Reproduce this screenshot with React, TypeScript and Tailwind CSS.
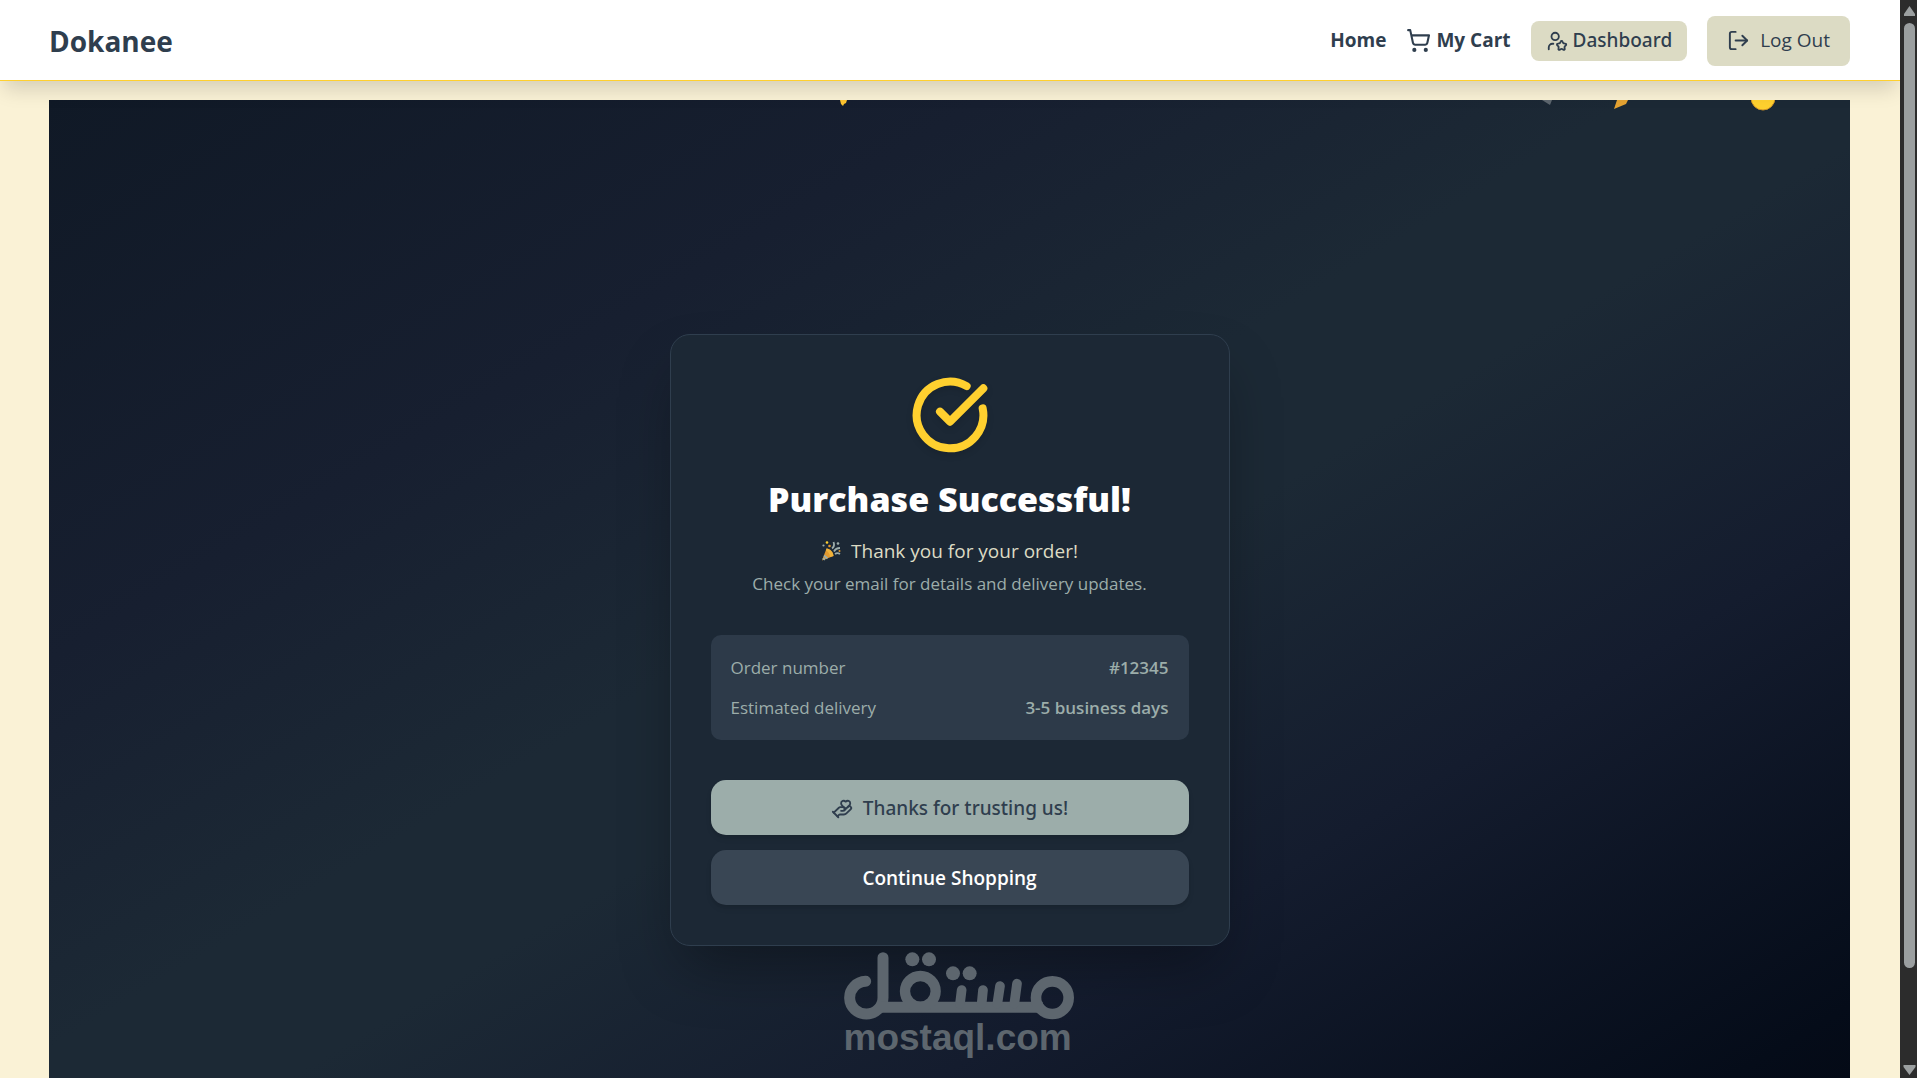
import { CircleCheckBig, HandHeart, LogOut, ShoppingCart, UserStar } from 'lucide-react';

function Header() {
  return (
    <header className="relative z-10 shrink-0 border-b border-[#ffd02f] bg-white shadow-[0_12px_19px_-4px_rgba(0,0,0,0.15)]">
      <div className="flex h-20 items-center justify-between pt-px pr-[50px] pl-[49px] text-[#2f3e4e]">
        <a href="#" className="text-[28px] font-bold">Dokanee</a>

        <nav className="flex items-center gap-5 text-[19px]">
          <a href="#" className="font-bold">Home</a>
          <a href="#" className="flex items-center gap-[5px] font-bold">
            <ShoppingCart className="size-[25px]" />
            My Cart
          </a>
          <a href="#" className="flex h-10 items-center gap-[5px] rounded-lg bg-[#dcdbc4] px-[15px] font-['Noto_Sans',sans-serif] font-medium">
            <UserStar className="size-[22px]" />
            Dashboard
          </a>
          <button type="button" className="flex h-[50px] items-center gap-2.5 rounded-lg bg-[#dcdbc4] px-5">
            <LogOut className="size-[23px]" />
            Log Out
          </button>
        </nav>
      </div>
    </header>
  );
}

function PartyPopper() {
  return (
    <svg viewBox="0 0 20 22" className="h-[22px] w-5" role="img" aria-label="Party popper">
      <path d="M1 20.500 5.500 8.500C9 9 12 12.500 12.500 16Z" fill="#e0982f" />
      <path d="M5.500 8.500C9.500 9 12.500 12 12.500 16L9 17C9 14 7 11.500 5 10.500Z" fill="#f0b23a" />
      <path d="M3 15.500 6.500 18.500M1.800 18.300 4 19.800" stroke="#9cadaa" strokeWidth="1.800" />
      <path d="M11 8.500C13 7 13.500 4.500 12.500 2M13 11.500C14.500 8.500 16.500 8 19 8M14 14C16 12.500 17.500 13 19 14" stroke="#9cadaa" strokeWidth="1.800" fill="none" />
      <circle cx="6" cy="2.500" r="1.300" fill="#ffd02f" />
      <circle cx="8.500" cy="6" r="1.300" fill="#e0982f" />
      <circle cx="17" cy="3.500" r="1.300" fill="#9cadaa" />
      <circle cx="18.500" cy="11" r="1" fill="#e0982f" />
      <circle cx="2.500" cy="5.500" r="1.100" fill="#9cadaa" />
    </svg>
  );
}

// Pieces just coming into view at the top edge
function Confetti() {
  return (
    <div className="pointer-events-none absolute inset-x-0 top-0 h-4" aria-hidden="true">
      <svg viewBox="0 0 8 6" className="absolute top-0 left-[43.9%] h-1.5 w-2">
        <path d="M0 0H7L6 3 4 4 3 6 1 4Z" fill="#ffc52f" />
      </svg>
      <svg viewBox="0 0 10 5" className="absolute top-0 left-[82.9%] h-[5px] w-2.5">
        <path d="M0 0H10L8 5Z" fill="#5d666e" />
      </svg>
      <svg viewBox="0 0 14 9" className="absolute top-0 left-[86.9%] h-[9px] w-3.5">
        <path d="M3 0H14L12 4 0 9Z" fill="#e5a332" />
      </svg>
      <svg viewBox="0 0 24 11" className="absolute top-0 left-[94.5%] h-[11px] w-6">
        <circle cx="12" cy="-2" r="12" fill="#ffd02f" stroke="#d29426" />
      </svg>
    </div>
  );
}

function SuccessCard() {
  return (
    <section className="w-full max-w-[560px] rounded-[20px] border border-[#2f3e4e] bg-[#1c2835] p-10 text-center shadow-[0_30px_60px_-12px_rgba(0,0,0,0.35)]">
      <CircleCheckBig className="mx-auto size-20 text-[#ffd02f] drop-shadow-md" strokeWidth={2.4} />
      <h1 className="mt-[22px] text-[34px] leading-[45px] font-black text-white">Purchase Successful!</h1>
      <p className="mt-3.5 flex items-center justify-center gap-2.5 text-[19px] leading-[30px] text-[#dcdbc4]">
        <PartyPopper />
        Thank you for your order!
      </p>
      <p className="mt-[5px] text-[17px] leading-[25px] text-[#9cadaa]">
        Check your email for details and delivery updates.
      </p>

      <dl className="mt-[39px] flex flex-col gap-[15px] rounded-[10px] bg-[#2d3a49] p-5 text-[17px] leading-[25px] text-[#9cadaa]">
        <div className="flex justify-between">
          <dt>Order number</dt>
          <dd className="font-semibold">#12345</dd>
        </div>
        <div className="flex justify-between">
          <dt>Estimated delivery</dt>
          <dd className="font-semibold">3-5 business days</dd>
        </div>
      </dl>

      <div className="mt-10 flex flex-col gap-[15px] text-[19px]">
        <button type="button" className="flex h-[55px] items-center justify-center gap-2.5 rounded-[15px] bg-[#9cadaa] pt-0.5 font-['Noto_Sans',sans-serif] font-medium text-[#2f3e4e] shadow-md">
          <HandHeart className="size-[22px]" />
          Thanks for trusting us!
        </button>
        <button type="button" className="h-[55px] rounded-[15px] bg-[#394654] pt-0.5 font-semibold text-white shadow-md">
          Continue Shopping
        </button>
      </div>
    </section>
  );
}

function Watermark() {
  return (
    <div className="pointer-events-none absolute bottom-[22px] left-1/2 z-20 -translate-x-1/2 text-[#5d666e]">
      <svg viewBox="69 60 690 204" className="h-[68px] w-[230px]" fill="none" stroke="currentColor" strokeLinecap="round" aria-hidden="true">
        <path d="M186 77V197A50 49 0 1 1 134 148" strokeWidth="33" />
        <path d="M180 226H665" strokeWidth="33" strokeLinecap="butt" />
        <circle cx="298" cy="178" r="46" strokeWidth="31" />
        <circle cx="694" cy="197" r="49" strokeWidth="32" />
        <path d="M422 174 417 215M486 174 482 215M537 162 529 215M588 155 580 215" strokeWidth="29" />
        <g fill="currentColor" stroke="none">
          <circle cx="274" cy="82" r="21" />
          <circle cx="324" cy="82" r="21" />
          <circle cx="396" cy="124" r="21" />
          <circle cx="446" cy="124" r="21" />
        </g>
      </svg>
      <p className="font-['Liberation_Sans',sans-serif] text-[37px] leading-9 font-bold">mostaql.com</p>
    </div>
  );
}

function Scrollbar() {
  return (
    <div className="flex w-[17px] shrink-0 flex-col items-center bg-[#2c2c2c] text-[#9b9fa0]" aria-hidden="true">
      <svg viewBox="0 0 17 23" className="h-[23px] w-[17px] shrink-0" fill="currentColor">
        <path d="M9.500 6 15 14V16H4V14Z" />
      </svg>
      <div className="flex w-full flex-1 justify-center pl-0.5">
        <div className="h-[91%] w-[11px] rounded-full bg-current" />
      </div>
      <svg viewBox="0 0 17 17" className="size-[17px] shrink-0" fill="currentColor">
        <path d="M3.500 4H15.500V6L9.500 14 3.500 6Z" />
      </svg>
    </div>
  );
}

export default function App() {
  return (
    <div className="relative flex h-screen overflow-hidden bg-[#faf2d6] font-['Open_Sans','Noto_Sans',sans-serif]">
      <div className="flex min-w-0 flex-1 flex-col overflow-hidden">
        <Header />
        <main className="pt-[19px] pr-[50px] pl-[49px]">
          <div className="relative flex min-h-screen items-center justify-center overflow-hidden bg-[linear-gradient(to_bottom_right,#101926,#171f30_26%,#1c2935_44%,#1c2935_52%,#141c2e_70%,#050c19_92%,#030712)] pt-0.5">
            <Confetti />
            <SuccessCard />
          </div>
        </main>
      </div>
      <Scrollbar />
      <Watermark />
    </div>
  );
}
